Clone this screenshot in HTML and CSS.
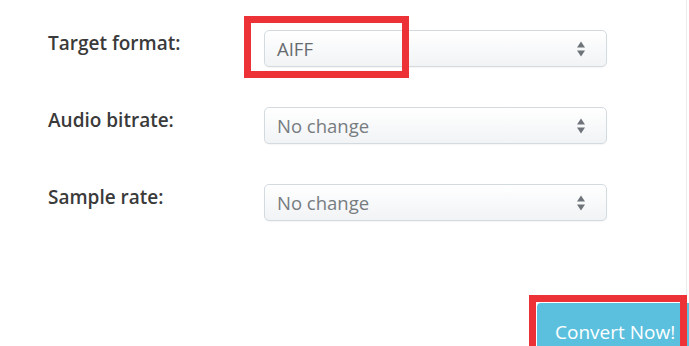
FILE: index.html
```html
<!DOCTYPE html>
<html lang="en">
<head>
<meta charset="utf-8">
<title>Convert audio</title>
<link rel="stylesheet" href="styles.css">
</head>
<body>
<main class="page">
  <form class="form">
    <div class="row">
      <label class="label">Target format:</label>
      <div class="select">
        <span class="value value-set">AIFF</span>
        <svg class="caret" width="8" height="16" viewBox="0 0 8 16"><path d="M4 0.5 L8 6.5 L0 6.5 Z M0 9.5 L8 9.5 L4 15.5 Z" fill="#6e7479"/></svg>
      </div>
    </div>
    <div class="row">
      <label class="label">Audio bitrate:</label>
      <div class="select">
        <span class="value">No change</span>
        <svg class="caret" width="8" height="16" viewBox="0 0 8 16"><path d="M4 0.5 L8 6.5 L0 6.5 Z M0 9.5 L8 9.5 L4 15.5 Z" fill="#6e7479"/></svg>
      </div>
    </div>
    <div class="row">
      <label class="label">Sample rate:</label>
      <div class="select">
        <span class="value">No change</span>
        <svg class="caret" width="8" height="16" viewBox="0 0 8 16"><path d="M4 0.5 L8 6.5 L0 6.5 Z M0 9.5 L8 9.5 L4 15.5 Z" fill="#6e7479"/></svg>
      </div>
    </div>
    <div class="actions">
      <button type="button" class="btn">Convert Now!</button>
    </div>
  </form>
  <span class="mark mark-format"></span>
  <span class="mark mark-button"></span>
</main>
</body>
</html>
```

FILE: styles.css
```css
html, body {
  margin: 0;
  height: 346px;
  overflow: hidden;
  background: #ffffff;
}

.page {
  position: relative;
  width: 686px;
  height: 346px;
  border-right: 1px solid #ececec;
  font-family: "Open Sans", "Liberation Sans", sans-serif;
}

.form {
  display: flex;
  flex-direction: column;
  gap: 40px;
  padding: 30px 0 0 48px;
}

.row {
  display: grid;
  grid-template-columns: 216px 343px;
  align-items: start;
}

.label {
  font-size: 19px;
  font-weight: 600;
  line-height: 26px;
  color: #3a3a3a;
}

.select {
  box-sizing: border-box;
  height: 37px;
  display: flex;
  align-items: center;
  justify-content: space-between;
  padding: 0 21px 0 12px;
  border: 1px solid #d3dbe1;
  border-radius: 5px;
  background: linear-gradient(#ffffff, #f1f3f5);
  box-shadow: 0 1px 1px rgba(0, 0, 0, 0.04);
}

.value {
  font-size: 18.5px;
  line-height: 25px;
  color: #777c80;
}

.value-set {
  color: #666b70;
}

.caret {
  display: block;
}

.actions {
  display: flex;
  justify-content: flex-end;
  margin-top: 42px;
}

.btn {
  width: 152px;
  height: 50px;
  margin-right: -3px;
  padding: 7px 0 0 18px;
  border: none;
  border-radius: 4px 0 0 0;
  background: #5bc0de;
  color: #ffffff;
  font-family: "Open Sans", "Liberation Sans", sans-serif;
  font-size: 19px;
  font-weight: 500;
  line-height: 26px;
  text-align: left;
  align-self: flex-start;
}

.mark {
  position: absolute;
  box-sizing: border-box;
  border: 7px solid #ec3237;
}

.mark-format {
  left: 244px;
  top: 16px;
  width: 165px;
  height: 62px;
}

.mark-button {
  left: 529px;
  top: 295px;
  width: 158px;
  height: 58px;
}
```
